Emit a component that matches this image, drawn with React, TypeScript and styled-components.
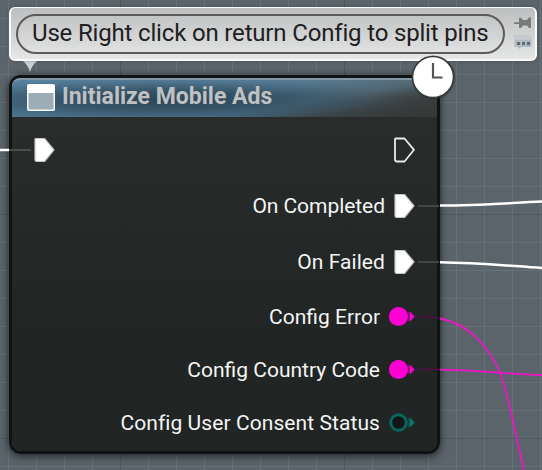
import React from "react";
import styled, { createGlobalStyle } from "styled-components";

const GlobalStyle = createGlobalStyle`
  html, body { margin: 0; padding: 0; overflow: hidden; }
  body { font-family: Roboto, "Liberation Sans", sans-serif; }
`;

const GraphCanvas = styled.main`
  position: relative;
  width: 542px;
  height: 470px;
  overflow: hidden;
  background-color: #5b646a;
  background-image:
    linear-gradient(90deg, #4f585e 1px, transparent 1px),
    linear-gradient(#4f585e 1px, transparent 1px),
    linear-gradient(90deg, #647277 1px, transparent 1px),
    linear-gradient(#647277 1px, transparent 1px);
  background-size: 224px 224px, 224px 224px, 28px 28px, 28px 28px;
  background-position: 120px 0, 0 214px, 8px 0, 0 18px;
`;

const CommentBubble = styled.aside`
  position: absolute;
  left: 9px;
  top: 7px;
  box-sizing: border-box;
  width: 528px;
  height: 54px;
  display: flex;
  align-items: flex-start;
  gap: 9px;
  padding: 5px 4px 5px 5px;
  border: 2px solid #fafafa;
  border-top-width: 1px;
  border-radius: 6px;
  background: linear-gradient(#bdbebf, #e5e6e6);
  box-shadow: 0 0 3px #30383e66;
`;

const CommentField = styled.div`
  box-sizing: border-box;
  width: 489px;
  height: 40px;
  flex: none;
  border: 2px solid #5b5b59;
  border-radius: 20px;
  padding-left: 14px;
  margin-top: 1px;
  line-height: 35px;
  font-size: 24px;
  letter-spacing: -0.17px;
  white-space: nowrap;
  color: #202020;
`;

const BubbleTools = styled.div`
  display: flex;
  flex-direction: column;
  gap: 5px;
  padding-top: 3px;
`;

const BubbleTail = styled.svg`
  position: absolute;
  left: 22px;
  top: 61px;
`;

const Node = styled.section`
  position: absolute;
  left: 9px;
  top: 75px;
  box-sizing: border-box;
  width: 431px;
  height: 379px;
  border: 3px solid #111313;
  border-radius: 12px;
  background: linear-gradient(#292c2bf8, #1f2322f8 70%);
  background-clip: padding-box;
  box-shadow: 0 3px 9px #1c2327b0, 0 0 5px #20282d99;
`;

const NodeHeader = styled.header`
  box-sizing: border-box;
  height: 39px;
  display: flex;
  align-items: center;
  gap: 7px;
  padding: 0 0 2px 15px;
  border-top: 2px solid #8099a8;
  border-radius: 8px 8px 0 0;
  background:
    radial-gradient(ellipse 250px 23px at 150px 20px, #2a4150e6 0%, #2d4555b3 40%, #35506133 80%, transparent 100%),
    linear-gradient(171deg, transparent 66%, #363a39cc 82%, #333736 100%),
    linear-gradient(180deg, #6a95b166, transparent 50%),
    linear-gradient(90deg, #4d7793 0%, #4a728d 50%, #4a6b80 68%, #4b5c66 85%, #45494a 100%);
`;

const Title = styled.h1`
  margin: -2px 0 0;
  font-size: 23px;
  line-height: 28px;
  font-weight: 700;
  color: #bfc1c2;
  white-space: nowrap;
`;

const PinList = styled.div`
  display: grid;
  grid-template-rows: 60px 52px 60px 50px 56px 50px;
  padding-top: 3px;
`;

const PinRow = styled.div<{ $inset: number; $gap: number }>`
  display: flex;
  align-items: center;
  justify-content: flex-end;
  gap: ${(p) => p.$gap}px;
  padding-right: ${(p) => p.$inset}px;
  font-size: 21px;
  line-height: 28px;
  color: #f4f5f4;
  white-space: nowrap;
`;

const InputPin = styled.div`
  display: flex;
  margin-right: auto;
  padding-left: 21px;
`;

const Label = styled.span<{ $track: number }>`
  letter-spacing: ${(p) => p.$track}px;
`;

const Wires = styled.svg`
  position: absolute;
  inset: 0;
  pointer-events: none;
`;

const LatentBadge = styled.svg`
  position: absolute;
  left: 409px;
  top: 52px;
`;

const ExecPin = ({ filled = true }: { filled?: boolean }) => (
  <svg width="23" height="26" viewBox="0 0 23 26" display="block">
    <path
      d="M2.5 1.5H11.5L21 12.8L11.5 24.5H4Q2 24.5 2 22.5V2Z"
      fill={filled ? "#fff" : "none"}
      stroke={filled ? "#c5c6c5" : "#e9eae9"}
      strokeWidth={filled ? 1.2 : 1.8}
      strokeLinejoin="round"
    />
  </svg>
);

const DataPin = ({ connected = true }: { connected?: boolean }) => (
  <svg width="26" height="20" viewBox="0 0 26 20" display="block">
    <circle
      cx="9.5"
      cy="9.5"
      r={connected ? 9.6 : 7.8}
      fill={connected ? "#ff00d4" : "#101615"}
      stroke={connected ? "none" : "#08665c"}
      strokeWidth="3"
    />
    <path d="M18.5 4Q21 9.5 18.5 15L21 13V6Z" fill={connected ? "#a0088a" : "#075a51"} />
    <path d="M21 4.5L25.7 9.5L21 14.5Z" fill={connected ? "#ff00d4" : "#08776a"} />
  </svg>
);

const pins = [
  { label: "On Completed", kind: "exec", track: -0.05 },
  { label: "On Failed", kind: "exec", track: 0.08 },
  { label: "Config Error", kind: "string", track: 0 },
  { label: "Config Country Code", kind: "string", track: 0 },
  { label: "Config User Consent Status", kind: "enum", track: 0.08 },
];

export default function App() {
  return (
    <>
      <GlobalStyle />
      <GraphCanvas>
        <Node>
          <NodeHeader>
            <svg width="28" height="27" viewBox="0 0 28 27">
              <rect x="0.75" y="0.75" width="26.5" height="25.5" rx="1" fill="#9eacb5" stroke="#f5f7f8" strokeWidth="1.5" />
              <path d="M1 1H27V9H1Z" fill="#fff" />
            </svg>
            <Title>Initialize Mobile Ads</Title>
          </NodeHeader>
          <PinList>
            <PinRow $inset={21} $gap={8}>
              <InputPin><ExecPin /></InputPin>
              <ExecPin filled={false} />
            </PinRow>
            {pins.map(({ label, kind, track }) => (
              <PinRow key={label} $inset={kind === "exec" ? 21 : 22} $gap={kind === "exec" ? 8 : 9}>
                <Label $track={track}>{label}</Label>
                {kind === "exec" ? <ExecPin /> : <DataPin connected={kind === "string"} />}
              </PinRow>
            ))}
          </PinList>
        </Node>

        <Wires width="542" height="470" fill="none">
          <g stroke="#fff" strokeWidth="2.5">
            <path d="M0 150H9" />
            <path d="M440 205.5C480 205.5 508 203 542 201.5" />
            <path d="M440 262.3C480 262.8 510 266 542 268" />
          </g>
          <g stroke="#434645" strokeWidth="2">
            <path d="M9 150H31" stroke="#4b4d4d" />
            <path d="M418 206H439" />
            <path d="M418 262H439" />
          </g>
          <g stroke="#ed14c9" strokeWidth="1.8">
            <path d="M440 318.5C465 323 487 342 500 373C509 395 514 430 524 470" />
            <path d="M440 369.7C475 370 505 374 542 375" />
          </g>
          <g stroke="#530d47" strokeWidth="1.5">
            <path d="M418 316.5Q430 316 439 318" />
            <path d="M418 369.5H439" />
          </g>
        </Wires>

        <BubbleTail width="16" height="13" viewBox="0 0 16 13">
          <path d="M1 0H15Q10 4 8 11Q6 4 1 0Z" fill="#cdd0d1" />
        </BubbleTail>
        <CommentBubble>
          <CommentField>Use Right click on return Config to split pins</CommentField>
          <BubbleTools>
            <svg width="18" height="14" viewBox="0 0 18 14">
              <path d="M0 6.3H5V2L7 1.5L9 4H13L15 1.5H17V12H15L13 9.5H9L7 12H5V8H0Z" fill="#797a7a" />
            </svg>
            <svg width="18" height="14" viewBox="0 0 18 14">
              <path d="M0.5 0H17.5V12H7L5 14L4 12H0.5Z" fill="#b0bac1" />
              <path d="M0.5 0H17.5V5H0.5Z" fill="#c4cacf" />
              <path d="M3 7H6V10H3ZM8 7H11V10H8ZM13 7H16V10H13Z" fill="#626c76" />
            </svg>
          </BubbleTools>
        </CommentBubble>

        <LatentBadge width="48" height="50" viewBox="0 0 48 50">
          <circle cx="24.5" cy="25.5" r="22" fill="#23282c" opacity=".4" />
          <circle cx="24" cy="25" r="20.5" fill="#fff" stroke="#373a3b" strokeWidth="1.6" />
          <path d="M24 11V25.5H33.5" fill="none" stroke="#555" strokeWidth="2.2" />
        </LatentBadge>
      </GraphCanvas>
    </>
  );
}
